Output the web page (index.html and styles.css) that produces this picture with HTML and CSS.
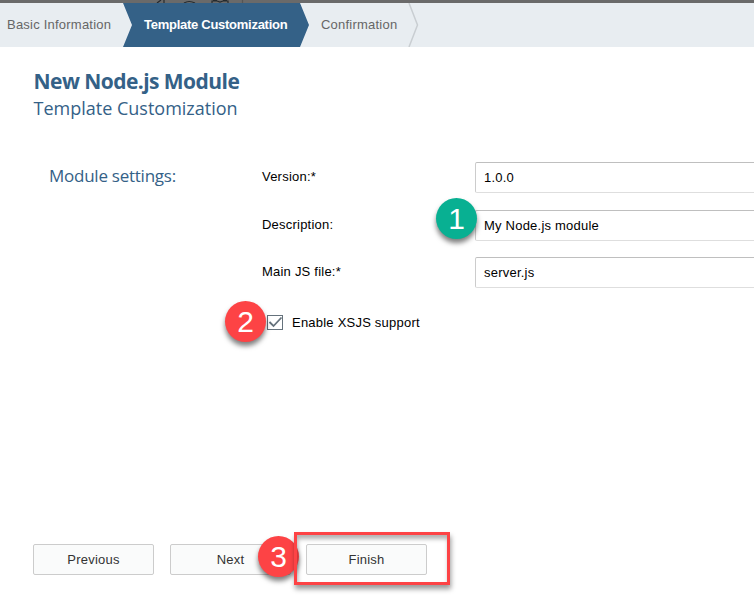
FILE: index.html
```html
<!DOCTYPE html>
<html lang="en">
<head>
<meta charset="utf-8">
<title>New Node.js Module</title>
<link rel="stylesheet" href="styles.css">
</head>
<body>
<div class="topbar">
  <svg width="754" height="3" viewBox="0 0 754 3" fill="none" stroke="#252a2e" stroke-width="1.2"><path d="M157 3 161 0M164 0v3M184 3q5-3 11 0M212 3v-2h5l3 1 3-1h5v2M213 0h4M223 0h4"/><path d="M242.500 0v3" stroke="#555"/></svg>
</div>
<nav class="steps">
  <div class="step basic"><span>Basic Information</span></div>
  <div class="step active"><span>Template Customization</span></div>
  <div class="step confirm"><span>Confirmation</span>
    <svg class="chevron" width="12" height="44" viewBox="0 0 12 44"><path d="M1 0 9.500 22 1 44" fill="none" stroke="#c9ced2" stroke-width="1.500"/></svg>
  </div>
</nav>
<main>
  <header>
    <h1><span>New Node.js Module</span></h1>
    <h2><span>Template Customization</span></h2>
  </header>
  <section class="settings">
    <h3><span>Module settings:</span></h3>
    <div class="form">
      <div class="row"><label for="ver">Version:*</label><div class="field" id="ver">1.0.0</div></div>
      <div class="row"><label for="desc">Description:</label><div class="field" id="desc">My Node.js module<b class="badge green">1</b></div></div>
      <div class="row last"><label for="main">Main JS file:*</label><div class="field" id="main">server.js</div></div>
      <div class="check">
        <svg width="17" height="16" viewBox="0 0 17 16"><rect x=".5" y=".5" width="15" height="14" fill="#fff" stroke="#65727c"/><path d="M2.500 7 6.500 11 14.500 2.500" fill="none" stroke="#65727c" stroke-width="1.800"/></svg>
        <span class="check-text">Enable XSJS support</span>
        <b class="badge two">2</b>
      </div>
    </div>
  </section>
  <footer>
    <div class="button">Previous</div>
    <div class="button">Next</div>
    <div class="button finish">Finish<b class="badge three">3</b><i class="highlight"></i></div>
  </footer>
</main>
</body>
</html>
```
FILE: styles.css
```css
* { box-sizing: border-box; }
body { margin: 0; width: 754px; height: 597px; overflow: hidden; background: #fff; font: 13px/16px "Liberation Sans", Arial, sans-serif; color: #000; letter-spacing: .22px; }
.topbar { height: 3px; background: #6a6a6a; }
.topbar svg { display: block; }
.steps { height: 44px; display: flex; background: #e8edf1; color: #666; line-height: 43px; white-space: nowrap; }
.basic { width: 123px; padding-left: 7px; }
.active { width: 187px; padding-left: 21px; color: #fff; background: #346187; font-weight: bold; letter-spacing: -.27px; clip-path: polygon(0 0, 177px 0, 186px 50%, 177px 100%, 0 100%, 9px 50%); }
.confirm { display: flex; padding-left: 11px; }
.chevron { margin-left: 11px; }
main { height: 550px; display: flex; flex-direction: column; }
header { padding: 20px 0 0 33.5px; color: #346187; }
h1, h2, h3 { margin: 0; font-family: "Open Sans", "Noto Sans", sans-serif; }
h1 { font-size: 21px; line-height: 28px; font-weight: 700; letter-spacing: -.55px; }
h2 { font-size: 18px; line-height: 26px; font-weight: 400; letter-spacing: 0; }
.settings { display: flex; padding: 41px 0 0 49px; }
h3 { width: 213px; color: #346187; font-size: 17px; line-height: 27px; font-weight: 400; letter-spacing: -.25px; }
.form { width: 492px; }
.row { display: flex; height: 48px; }
.row.last { height: 47px; margin-top: -1px; }
.row label { flex: none; width: 213px; padding-top: 7px; }
.field { position: relative; width: 300px; flex: none; height: 31px; padding: 7px 8px; border: 1px solid #dedede; border-top-color: #bfbfbf; border-left-color: #ccc; border-radius: 2px; }
.check { position: relative; display: flex; width: 170px; height: 22px; padding: 11px 0 0 5px; }
.check svg { flex: none; }
.check-text { margin-left: 8px; white-space: nowrap; }
.badge { position: absolute; width: 41px; height: 41px; border-radius: 50%; color: #fff; background: #fd4345; font-weight: 400; font-size: 30px; line-height: 41px; text-align: center; letter-spacing: 0; box-shadow: 0 4px 5px rgba(0,0,0,.5); }
.badge.green { left: -40px; top: -13px; background: #08b092; }
.two { left: -37px; top: -3px; }
footer { display: flex; gap: 16px; padding-left: 33px; margin-top: auto; margin-bottom: 22px; }
.button { position: relative; width: 121px; height: 31px; border: 1px solid #ccc; border-radius: 2px; background: #fafbfb; color: #333; line-height: 29px; text-align: center; }
.finish { margin-left: -1px; }
.three { left: -49px; top: -9px; }
.highlight { position: absolute; left: -13px; top: -13px; width: 156px; height: 53px; border: 3px solid #fd4345; box-shadow: 1px 4px 5px rgba(0,0,0,.4), inset 1px 4px 4px rgba(0,0,0,.3); }
```
